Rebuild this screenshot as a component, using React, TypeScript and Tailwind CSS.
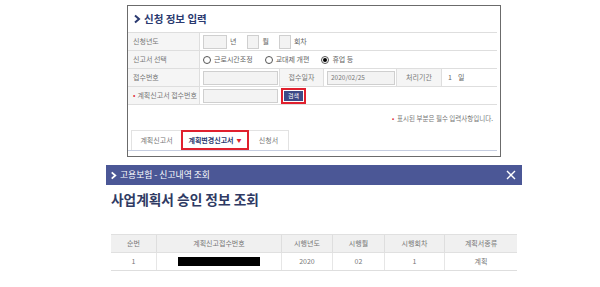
import React from "react";

const font = { fontFamily: '"Noto Sans CJK KR", "Noto Sans", sans-serif' };

function Chevron({ size, color }: { size: number; color: string }) {
  return (
    <svg width={size} height={size} viewBox="0 0 10 10">
      <path d="M3 1.5L7 5L3 8.5" fill="none" stroke={color} strokeWidth="2" />
    </svg>
  );
}

function Box({ w }: { w: string }) {
  return <div className={`${w} h-[14px] border border-[#cfcfcf] bg-[#f3f3f3]`} />;
}

function Radio({ on, label }: { on?: boolean; label: string }) {
  return (
    <span className="flex items-center gap-[3px]">
      <span className="w-[8px] h-[8px] rounded-full border border-[#555] bg-white flex items-center justify-center">
        {on && <span className="w-[4px] h-[4px] rounded-full bg-black" />}
      </span>
      <span>{label}</span>
    </span>
  );
}

function Row({ label, req, children }: { label: string; req?: boolean; children: React.ReactNode }) {
  return (
    <div className="flex h-[18px] border-b border-[#dedede]">
      <div className="w-[72px] shrink-0 bg-[#f5f5f5] border-r border-[#dedede] flex items-center pl-[5px] text-[#777]">
        {req && <span className="text-[#e0303a] mr-[2px]">•</span>}
        {label}
      </div>
      <div className="flex-1 flex items-center pl-[3px] text-[#666]">{children}</div>
    </div>
  );
}

export default function App() {
  return (
    <div className="w-[600px] h-[287px] bg-white overflow-hidden text-[7px]" style={font}>
      {/* top: 신청 정보 입력 */}
      <div className="ml-[127px] mt-[5px] w-[374px] h-[152px] border border-[#6b6b6b] flex flex-col">
        <div className="h-[26px] flex items-center pl-[4px] gap-[2px] text-[#2b3a70] font-bold text-[10.5px]">
          <Chevron size={10} color="#2b3a70" />
          <span>신청 정보 입력</span>
        </div>
        <div className="mr-[3px] border-t border-[#dedede]">
          <Row label="신청년도">
            <Box w="w-[24px]" />
            <span className="ml-[3px] mr-[11px]">년</span>
            <Box w="w-[12px]" />
            <span className="ml-[3px] mr-[10px]">월</span>
            <Box w="w-[12px]" />
            <span className="ml-[3px]">회차</span>
          </Row>
          <Row label="신고서 선택">
            <div className="flex items-center gap-[12px]">
              <Radio label="근로시간조정" />
              <Radio label="교대제 개편" />
              <Radio on label="휴업 등" />
            </div>
          </Row>
          <div className="flex h-[18px] border-b border-[#dedede]">
            <div className="w-[72px] shrink-0 bg-[#f5f5f5] border-r border-[#dedede] flex items-center pl-[5px] text-[#777]">접수번호</div>
            <div className="w-[80px] flex items-center pl-[3px] border-r border-[#dedede]">
              <Box w="w-[75px]" />
            </div>
            <div className="w-[44px] bg-[#f5f5f5] border-r border-[#dedede] flex items-center justify-center text-[#777]">접수일자</div>
            <div className="w-[73px] flex items-center pl-[3px] border-r border-[#dedede]">
              <div className="w-[68px] h-[14px] border border-[#cfcfcf] bg-[#f3f3f3] flex items-center pl-[3px] text-[6.5px] text-[#777]">2020/02/25</div>
            </div>
            <div className="w-[45px] bg-[#f5f5f5] border-r border-[#dedede] flex items-center justify-center text-[#777]">처리기간</div>
            <div className="flex-1 flex items-center pl-[6px] text-[#666] gap-[6px]">
              <span>1</span>
              <span>일</span>
            </div>
          </div>
          <Row label="계획신고서 접수번호" req>
            <Box w="w-[75px]" />
            <div className="ml-[3px] border-2 border-[#e0202e] p-[1px]">
              <div className="w-[19px] h-[10px] bg-[#3d4a86] text-white text-[6px] flex items-center justify-center">검색</div>
            </div>
          </Row>
        </div>
        <div className="h-[25px] mr-[7px] pt-[2px] flex items-center justify-end text-[6.5px] text-[#777]">
          <span className="text-[#e0303a] mr-[3px]">•</span>
          표시된 부분은 필수 입력사항입니다.
        </div>
        <div className="mr-[3px] h-[21px] pl-[3px] flex border-b border-[#c5cde0] text-[#777]">
          <div className="w-[50px] border-t border-l border-[#e2e2e2] flex items-center justify-center">계획신고서</div>
          <div className="w-[68px] border-2 border-[#e0202e] flex items-center justify-center gap-[3px] font-bold text-[#2b3a70]">
            <span>계획변경신고서</span>
            <span className="text-[#e0202e] text-[5px]">▼</span>
          </div>
          <div className="w-[40px] border-t border-r border-[#e2e2e2] flex items-center justify-center">신청서</div>
        </div>
      </div>

      {/* bottom: 사업계획서 승인 정보 조회 */}
      <div className="ml-[106px] mt-[8px] w-[416px]">
        <div className="h-[20px] bg-[#4b5796] flex items-center justify-between pl-[3px] pr-[5px] text-white">
          <span className="flex items-center gap-[2px] text-[8.8px]">
            <Chevron size={9} color="#ffffff" />
            고용보험 - 신고내역 조회
          </span>
          <svg width="10" height="10" viewBox="0 0 10 10" className="mr-[1px]">
            <path d="M1 1L9 9M9 1L1 9" stroke="white" strokeWidth="1.4" />
          </svg>
        </div>
        <div className="h-[25px] flex items-end pl-[5px] text-[13.7px] font-bold text-[#2f3a63]">사업계획서 승인 정보 조회</div>
        <div className="mt-[24px] ml-[5px] w-[406px] text-[#777] text-[7px]">
          <div className="grid grid-cols-[46px_125px_51px_52px_60px_72px] h-[19px] bg-[#f0f0f0] border-t border-[#cfcfcf] border-b border-[#e0e0e0]">
            <div className="flex items-center justify-center border-r border-[#dedede]">순번</div>
            <div className="flex items-center justify-center border-r border-[#dedede]">계획신고접수번호</div>
            <div className="flex items-center justify-center border-r border-[#dedede]">시행년도</div>
            <div className="flex items-center justify-center border-r border-[#dedede]">시행월</div>
            <div className="flex items-center justify-center border-r border-[#dedede]">시행회차</div>
            <div className="flex items-center justify-center">계획서종류</div>
          </div>
          <div className="grid grid-cols-[46px_125px_51px_52px_60px_72px] h-[18px] border-b border-[#dedede]">
            <div className="flex items-center justify-center border-r border-[#e6e6e6]">1</div>
            <div className="flex items-center justify-center border-r border-[#e6e6e6]">
              <div className="w-[82px] h-[9px] bg-black" />
            </div>
            <div className="flex items-center justify-center border-r border-[#e6e6e6]">2020</div>
            <div className="flex items-center justify-center border-r border-[#e6e6e6]">02</div>
            <div className="flex items-center justify-center border-r border-[#e6e6e6]">1</div>
            <div className="flex items-center justify-center">계획</div>
          </div>
        </div>
      </div>
    </div>
  );
}
